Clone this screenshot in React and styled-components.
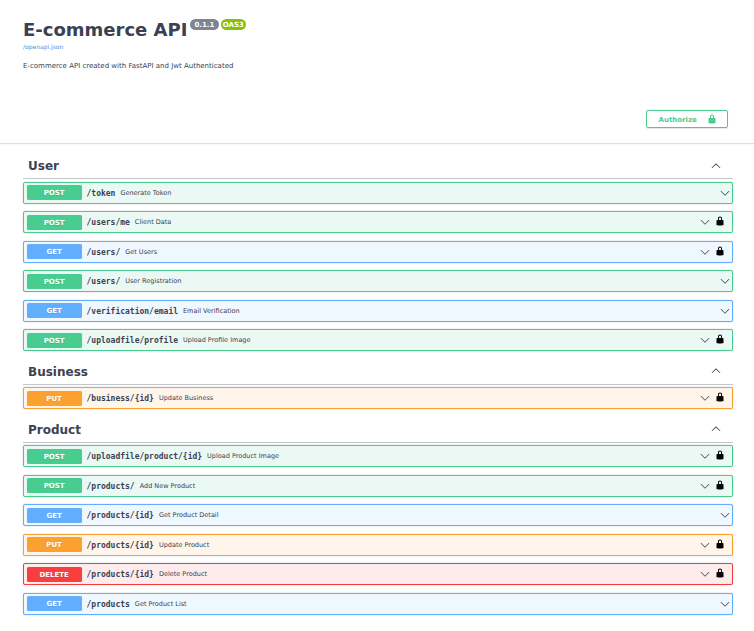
import React from "react";
import styled, { createGlobalStyle } from "styled-components";

const GlobalStyle = createGlobalStyle`
  * { box-sizing: border-box; }
  body {
    margin: 0;
    background: #fff;
    color: #3b4151;
    font-family: "DejaVu Sans", sans-serif;
  }
`;

const palette = {
  POST: { main: "#49cc90", tint: "#eaf9f3" },
  GET: { main: "#61affe", tint: "#eff7ff" },
  PUT: { main: "#fca130", tint: "#fff5ea" },
  DELETE: { main: "#f93e3e", tint: "#feebeb" },
};

const Page = styled.main`
  height: 631px;
  overflow: hidden;
`;

const Info = styled.header`
  height: 95px;
  padding: 19px 23px 0;
`;

const TitleRow = styled.div`
  display: flex;
  align-items: flex-start;
  height: 23px;
`;

const Title = styled.h1`
  margin: 0 3px 0 0;
  font-size: 18px;
  line-height: 22px;
  white-space: nowrap;
`;

const Badge = styled.span`
  height: 11px;
  width: ${(p) => p.$width}px;
  margin-right: 2px;
  padding-right: 1px;
  border-radius: 6px;
  background: ${(p) => p.$color};
  color: #fff;
  font-size: 7px;
  font-weight: 700;
  line-height: 12px;
  text-align: center;
`;

const SpecLink = styled.a`
  display: block;
  height: 10px;
  color: #4990e2;
  font-size: 6px;
  line-height: 10px;
`;

const Description = styled.p`
  margin: 9px 0 0;
  font-size: 7px;
  line-height: 10px;
`;

const SchemeBar = styled.section`
  display: flex;
  justify-content: flex-end;
  height: 48px;
  padding: 15px 26px 15px 0;
  background: #fff;
  box-shadow: 0 1px 1px rgba(0, 0, 0, 0.13);
`;

const AuthorizeButton = styled.button`
  display: flex;
  align-items: center;
  justify-content: space-between;
  width: 82px;
  height: 18px;
  padding: 0 10px 0 11.5px;
  border: 1px solid #49cc90;
  border-radius: 2px;
  background: transparent;
  box-shadow: 0 0.5px 1px rgba(0, 0, 0, 0.1);
  color: #49cc90;
  font: 700 7px "DejaVu Sans", sans-serif;
`;

const AuthorizeLabel = styled.span`
  padding-top: 1px;
`;

const Operations = styled.div`
  padding: 10px 21px 0 23px;
`;

const TagHeader = styled.h2`
  display: flex;
  align-items: center;
  justify-content: space-between;
  height: 26px;
  margin: 0 0 2.5px;
  padding: 0 12px 0 5px;
  border-bottom: 1px solid rgba(59, 65, 81, 0.3);
  font-size: 12px;
`;

const TagName = styled.span`
  padding-top: 1px;
`;

const Operation = styled.div`
  display: flex;
  align-items: center;
  height: 22px;
  margin-bottom: 7.5px;
  padding: 0 2.5px 0 3px;
  border: 1px solid ${(p) => palette[p.$method].main};
  border-radius: 2px;
  background: ${(p) => palette[p.$method].tint};
  box-shadow: 0 0 1.5px rgba(0, 0, 0, 0.25);
`;

const Method = styled.span`
  width: 55px;
  height: 15px;
  padding-right: 0.8px;
  border-radius: 1.5px;
  background: ${(p) => palette[p.$method].main};
  color: #fff;
  font-size: 7px;
  font-weight: 700;
  line-height: 16px;
  text-align: center;
  text-shadow: 0 0.5px 0 rgba(0, 0, 0, 0.1);
`;

const Path = styled.span`
  padding: 1px 5px 0 4.5px;
  font: 700 8px "DejaVu Sans Mono", monospace;
`;

const Summary = styled.span`
  flex: 1;
  font-size: 6.5px;
`;

const Icon = styled.svg`
  display: block;
  width: 10px;
  height: 10px;
  fill: currentColor;
`;

const LockSlot = styled.span`
  margin: 0 5px 2px 5px;
  color: #000;
`;

const Chevron = ({ up }) => (
  <Icon viewBox="0 0 20 20">
    <path
      transform={up ? "rotate(180 10 10)" : undefined}
      d="M17.418 6.109c.272-.268.709-.268.979 0s.271.701 0 .969l-7.908 7.83c-.27.268-.707.268-.979 0l-7.908-7.83c-.27-.268-.27-.701 0-.969.271-.268.709-.268.979 0L10 13.25z"
    />
  </Icon>
);

const Lock = () => (
  <Icon viewBox="0 0 20 20">
    <path d="M15.8 8H14V5.6C14 2.703 12.665 1 10 1 7.334 1 6 2.703 6 5.6V8H4c-.553 0-1 .646-1 1.199V17c0 .549.428 1.139.951 1.307l1.197.387C5.672 18.861 6.55 19 7.1 19h5.8c.549 0 1.428-.139 1.951-.307l1.196-.387c.524-.167.953-.757.953-1.306V9.199C17 8.646 16.352 8 15.8 8zM12 8H8V5.199C8 3.754 8.797 3 10 3c1.203 0 2 .754 2 2.199V8z" />
  </Icon>
);

const tags = [
  {
    name: "User",
    operations: [
      ["POST", "/token", "Generate Token", false],
      ["POST", "/users/me", "Client Data", true],
      ["GET", "/users/", "Get Users", true],
      ["POST", "/users/", "User Registration", false],
      ["GET", "/verification/email", "Email Verification", false],
      ["POST", "/uploadfile/profile", "Upload Profile Image", true],
    ],
  },
  {
    name: "Business",
    operations: [["PUT", "/business/{id}", "Update Business", true]],
  },
  {
    name: "Product",
    operations: [
      ["POST", "/uploadfile/product/{id}", "Upload Product Image", true],
      ["POST", "/products/", "Add New Product", true],
      ["GET", "/products/{id}", "Get Product Detail", false],
      ["PUT", "/products/{id}", "Update Product", true],
      ["DELETE", "/products/{id}", "Delete Product", true],
      ["GET", "/products", "Get Product List", false],
    ],
  },
];

export default function App() {
  return (
    <Page>
      <GlobalStyle />
      <Info>
        <TitleRow>
          <Title>E-commerce API</Title>
          <Badge $width={29} $color="#7d8492">0.1.1</Badge>
          <Badge $width={25} $color="#89bf04">OAS3</Badge>
        </TitleRow>
        <SpecLink>/openapi.json</SpecLink>
        <Description>E-commerce API created with FastAPI and Jwt Authenticated</Description>
      </Info>
      <SchemeBar>
        <AuthorizeButton>
          <AuthorizeLabel>Authorize</AuthorizeLabel>
          <Lock />
        </AuthorizeButton>
      </SchemeBar>
      <Operations>
        {tags.map((tag) => (
          <section key={tag.name}>
            <TagHeader>
              <TagName>{tag.name}</TagName>
              <Chevron up />
            </TagHeader>
            {tag.operations.map(([method, path, summary, locked]) => (
              <Operation key={method + path} $method={method}>
                <Method $method={method}>{method}</Method>
                <Path>{path}</Path>
                <Summary>{summary}</Summary>
                <Chevron />
                {locked && (
                  <LockSlot>
                    <Lock />
                  </LockSlot>
                )}
              </Operation>
            ))}
          </section>
        ))}
      </Operations>
    </Page>
  );
}
